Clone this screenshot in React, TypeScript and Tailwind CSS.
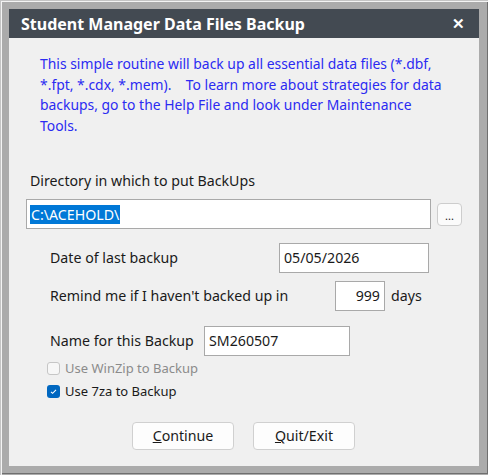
import React from "react";

const font = { fontFamily: '"Noto Sans", "Open Sans", sans-serif' };

function Box({ className, children }: { className: string; children?: React.ReactNode }) {
  return (
    <div className={"bg-white border border-[#a9a9a9] flex items-center " + className}>{children}</div>
  );
}

export default function App() {
  return (
    <div className="w-[488px] h-[475px] bg-[#c4c4c4] flex" style={font}>
      <div className="mt-px ml-px w-[487px] h-[474px] border-t border-l border-[#f4f4f4] bg-[#ababab] flex">
        <div className="w-[486px] h-[472px] border-r border-b border-[#6f6f6f] pt-[7px] pl-[7px] flex">
          <div className="w-[470px] h-[457px] bg-[#f0f0f0] flex flex-col">
            {/* Title bar */}
            <div className="h-[29px] bg-[#434a52] flex items-center justify-between pl-[12px] pr-[14px]">
              <span className="text-white font-bold text-[16px] leading-none">
                Student Manager Data Files Backup
              </span>
              <span className="text-white font-bold text-[15px] leading-none">✕</span>
            </div>
            {/* Paragraph */}
            <p className="mt-[16px] ml-[31px] mr-[30px] text-[#2b2bf2] text-[13.9px] leading-[20.5px]">
              This simple routine will back up all essential data files (*.dbf, *.fpt, *.cdx, *.mem).&nbsp;&nbsp;&nbsp;&nbsp;To learn more about strategies for data backups, go to the Help File and look under Maintenance Tools.
            </p>
            <div className="mt-[35px] ml-[21px] text-[#1a1a1a] text-[14.2px] leading-[20px]">
              Directory in which to put BackUps
            </div>
            <div className="mt-[8px] ml-[17px] flex items-center">
              <Box className="w-[405px] h-[30px] px-[3px]">
                <span className="bg-[#0078d7] text-white text-[14.2px] leading-[19px] px-px">C:\ACEHOLD\</span>
              </Box>
              <div className="ml-[6px] w-[25px] h-[23px] rounded-[4px] border border-[#cdcdcd] bg-[#fbfbfb] flex items-end justify-center pb-[4px] text-[11px] leading-none text-[#222]">
                ...
              </div>
            </div>
            <div className="ml-[41px] mt-[14px] flex items-center text-[#1a1a1a] text-[14.2px]">
              <span className="w-[229px]">Date of last backup</span>
              <Box className="w-[150px] h-[30px] px-[4px]">05/05/2026</Box>
            </div>
            <div className="ml-[41px] mt-[8px] flex items-center text-[#1a1a1a] text-[14.2px]">
              <span className="w-[285px]">Remind me if I haven't backed up in</span>
              <Box className="w-[50px] h-[30px] px-[4px] justify-end">999</Box>
              <span className="ml-[6px]">days</span>
            </div>
            <div className="ml-[41px] mt-[15px] flex items-center text-[#1a1a1a] text-[14.2px]">
              <span className="w-[154px]">Name for this Backup</span>
              <Box className="w-[146px] h-[30px] px-[4px]">SM260507</Box>
            </div>
            <div className="ml-[38px] mt-[2px] flex items-center text-[13px] leading-[20px] text-[#8b8b8b]">
              <span className="w-[13px] h-[13px] rounded-[3px] border border-[#c6c6c6] bg-[#f7f7f7]" />
              <span className="ml-[5px]">Use WinZip to Backup</span>
            </div>
            <div className="ml-[38px] mt-[3px] flex items-center text-[13px] leading-[20px] text-[#1a1a1a]">
              <span className="w-[13px] h-[13px] rounded-[3px] bg-[#0067c0] flex items-center justify-center">
                <svg width="9" height="9" viewBox="0 0 9 9">
                  <path d="M2 4.8 L3.6 6.3 L7 2.8" fill="none" stroke="white" strokeWidth="1.1" />
                </svg>
              </span>
              <span className="ml-[5px]">Use 7za to Backup</span>
            </div>
            <div className="mt-[21px] ml-[123px] flex gap-[19px] text-[14.2px] text-[#1a1a1a]">
              <div className="w-[102px] h-[28px] rounded-[4px] border border-[#d0d0d0] bg-[#fdfdfd] flex items-center justify-center">
                <span><span className="underline">C</span>ontinue</span>
              </div>
              <div className="w-[102px] h-[28px] rounded-[4px] border border-[#d0d0d0] bg-[#fdfdfd] flex items-center justify-center">
                <span><span className="underline">Q</span>uit/Exit</span>
              </div>
            </div>
          </div>
        </div>
      </div>
    </div>
  );
}
